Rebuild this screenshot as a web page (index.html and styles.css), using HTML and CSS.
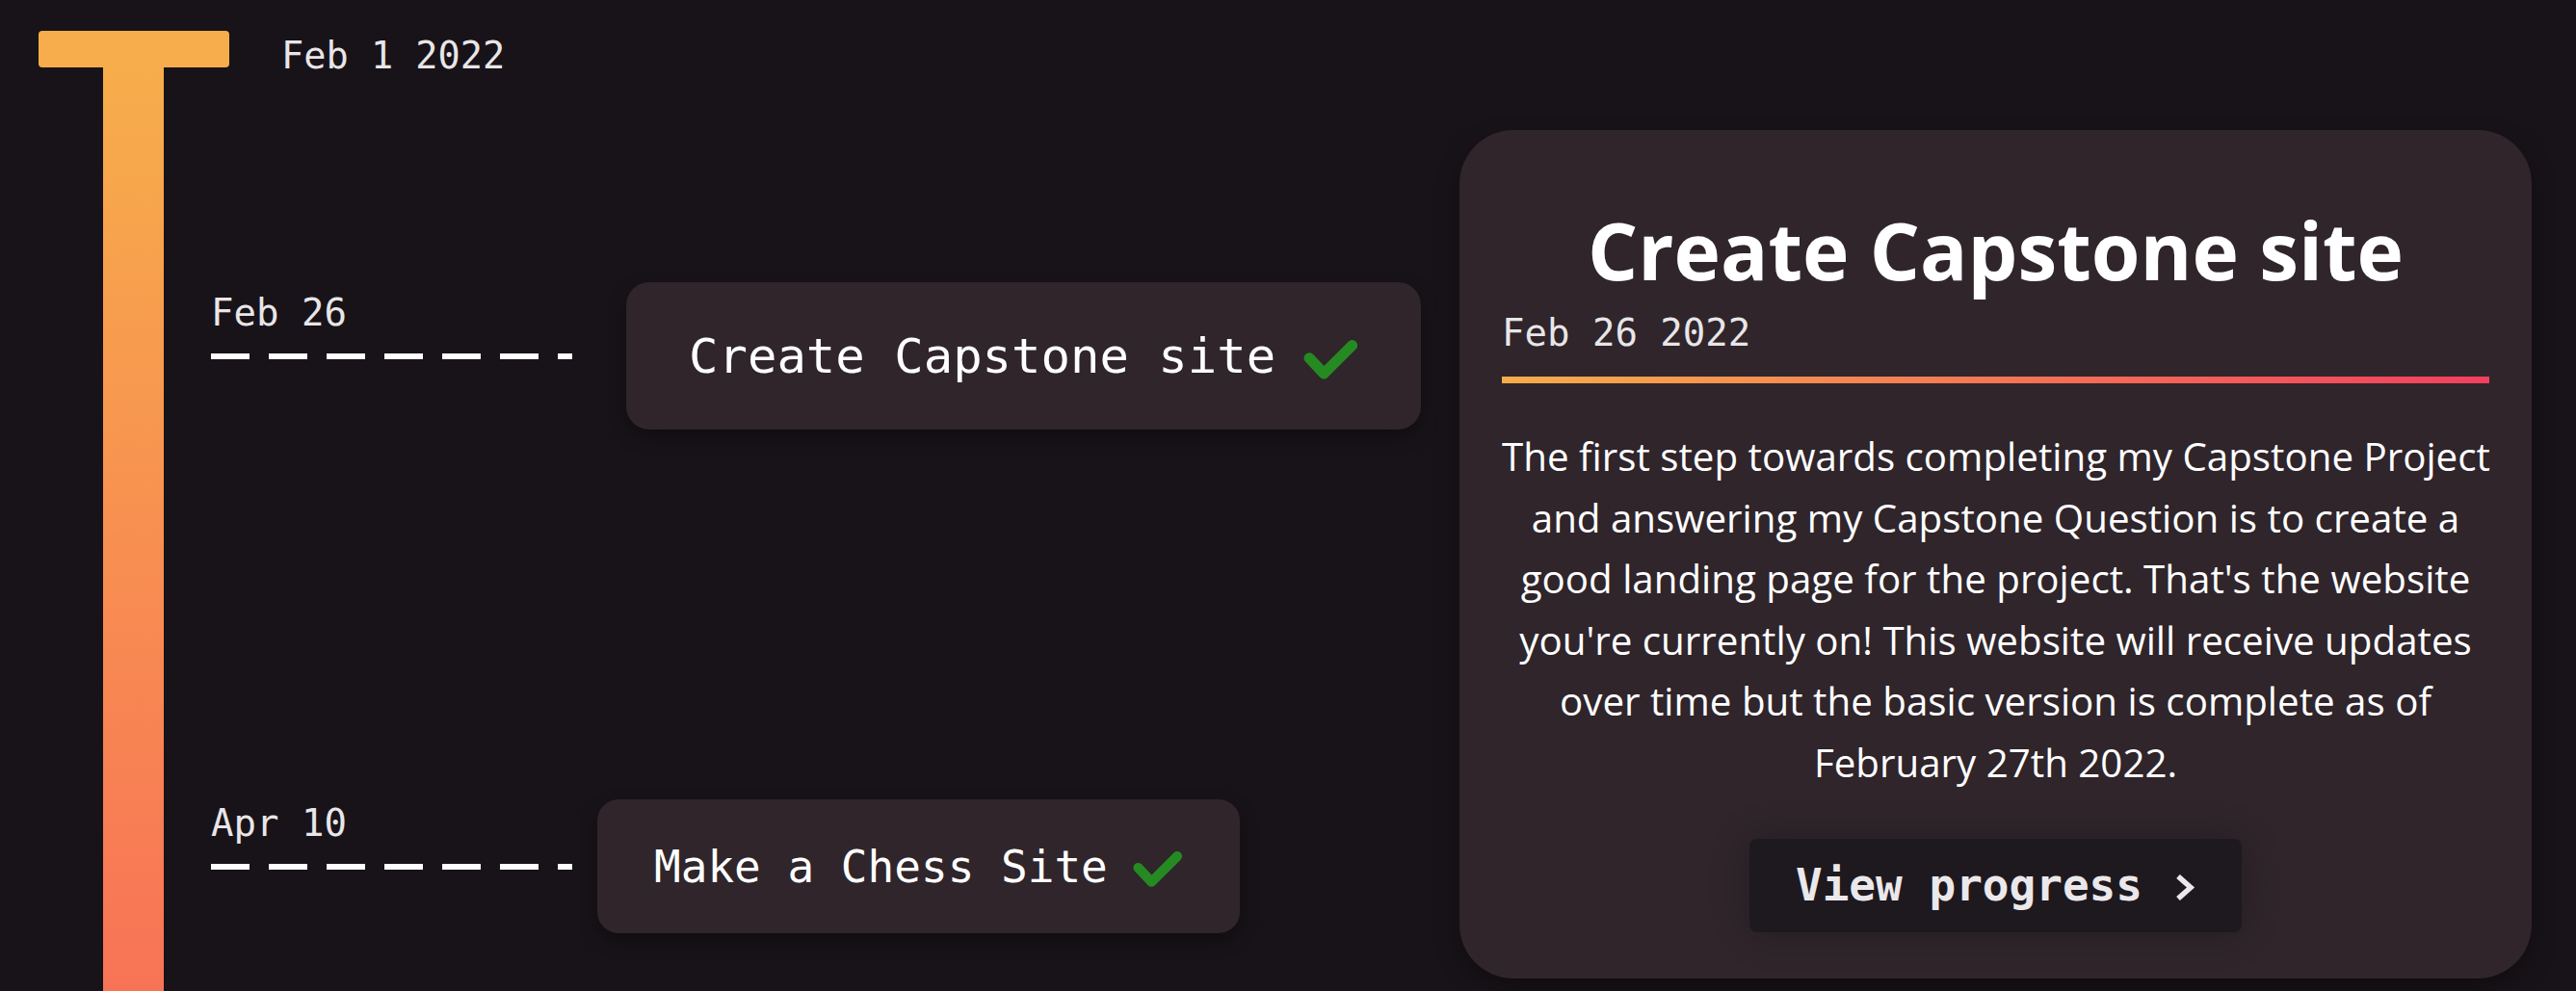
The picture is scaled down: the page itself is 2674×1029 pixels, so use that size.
FILE: index.html
```html
<!DOCTYPE html>
<html lang="en">
<head>
<meta charset="utf-8">
<title>Capstone timeline</title>
<link rel="stylesheet" href="styles.css">
</head>
<body>
<div class="page">
  <section class="timeline">
    <div class="rail">
      <div class="rail-cap"></div>
      <div class="rail-stem"></div>
    </div>
    <div class="events">
      <div class="start-date">Feb 1 2022</div>
      <div class="event event-first">
        <div class="connector">
          <span class="event-date">Feb 26</span>
          <span class="dash"></span>
        </div>
        <div class="event-card event-card-active">
          <span>Create Capstone site</span>
          <svg class="check" viewBox="0 0 56 42" aria-hidden="true"><polyline points="6,18.5 21,34.5 50,5.5"/></svg>
        </div>
      </div>
      <div class="event event-second">
        <div class="connector">
          <span class="event-date">Apr 10</span>
          <span class="dash"></span>
        </div>
        <div class="event-card">
          <span>Make a Chess Site</span>
          <svg class="check" viewBox="0 0 56 42" aria-hidden="true"><polyline points="6,18.5 21,34.5 50,5.5"/></svg>
        </div>
      </div>
    </div>
  </section>
  <article class="detail">
    <h1 class="detail-title">Create Capstone site</h1>
    <div class="detail-date">Feb 26 2022</div>
    <div class="detail-rule"></div>
    <p class="detail-text">The first step towards completing my Capstone Project<br>and answering my Capstone Question is to create a<br>good landing page for the project. That's the website<br>you're currently on! This website will receive updates<br>over time but the basic version is complete as of<br>February 27th 2022.</p>
    <button class="detail-button" type="button">View progress<svg class="chevron" viewBox="0 0 22 27" aria-hidden="true"><polyline points="4,2 17,13.5 4,25"/></svg></button>
  </article>
</div>
</body>
</html>
```

FILE: styles.css
```css
html, body {
  margin: 0;
  height: 100%;
}

body {
  background: #181318;
  overflow: hidden;
  font-family: "DejaVu Sans Mono", "Liberation Mono", monospace;
  color: #ffffff;
}

.page {
  display: flex;
  height: 1029px;
}

/* ---------- timeline ---------- */
.timeline {
  flex: 1;
  display: flex;
  padding-left: 107px;
}

.rail {
  flex: none;
  width: 63px;
  display: flex;
  flex-direction: column;
  align-items: center;
  padding-top: 32px;
}

.rail-cap {
  flex: none;
  width: 198px;
  height: 38px;
  background: #f7ad4b;
  border-radius: 4px;
}

.rail-stem {
  flex: 1;
  width: 63px;
  background: linear-gradient(180deg, #f7ad4b 0%, #f87356 100%);
}

.events {
  margin-left: 49px;
  padding-top: 37.5px;
  display: flex;
  flex-direction: column;
}

.start-date {
  margin-left: 73px;
  font-size: 38.6px;
  line-height: 40px;
  color: #e8e6e8;
}

.event {
  display: flex;
  align-items: center;
}

.event-first {
  margin-top: 215.5px;
}

.event-second {
  margin-top: 384px;
}

.connector {
  flex: none;
  width: 375px;
  display: flex;
  flex-direction: column;
  padding-bottom: 61.5px;
}

.event-date {
  font-size: 39px;
  line-height: 40px;
  color: #e8e6e8;
  margin-bottom: 21.5px;
}

.dash {
  display: block;
  height: 6px;
  background: repeating-linear-gradient(90deg, #ffffff 0 40px, transparent 40px 60px);
}

.event-card {
  flex: none;
  box-sizing: border-box;
  display: flex;
  align-items: center;
  height: 139px;
  margin-left: 26px;
  padding: 0 60px 0 59px;
  background: #2f252b;
  border-radius: 22px;
  box-shadow: 0 8px 18px rgba(0, 0, 0, 0.35);
  font-size: 46px;
  white-space: nowrap;
  color: #ffffff;
}

.event-card-active {
  height: 153px;
  margin-left: 56px;
  padding: 0 66px 0 65px;
  border-radius: 24px;
  font-size: 50.6px;
}

.check {
  flex: none;
  width: 1.12em;
  height: 0.84em;
  margin-left: 0.56em;
  margin-top: 0.18em;
  fill: none;
  stroke: #258a22;
  stroke-width: 11;
  stroke-linecap: round;
  stroke-linejoin: round;
}

/* ---------- detail card ---------- */
.detail {
  flex: none;
  box-sizing: border-box;
  width: 1113px;
  height: 881px;
  margin: 135px 46px 0 0;
  padding: 74.2px 44px 48px;
  background: #2f252b;
  border-radius: 56px;
  box-shadow: 0 10px 24px rgba(0, 0, 0, 0.35);
  display: flex;
  flex-direction: column;
}

.detail-title {
  margin: 0;
  text-align: center;
  font-family: "Open Sans", "Noto Sans", sans-serif;
  font-weight: 700;
  font-size: 82px;
  line-height: 100px;
  color: #ffffff;
}

.detail-date {
  margin-top: 16.4px;
  font-size: 39px;
  line-height: 40px;
  color: #e8e6e8;
}

.detail-rule {
  margin-top: 25.5px;
  height: 7px;
  background: linear-gradient(90deg, #f6ad4b 0%, #f43f5e 100%);
}

.detail-text {
  margin: 44px 0 0;
  text-align: center;
  white-space: nowrap;
  font-family: "Open Sans", "Noto Sans", sans-serif;
  font-size: 40.3px;
  line-height: 63.6px;
  color: #ffffff;
}

.detail-button {
  align-self: center;
  margin-top: 47.4px;
  height: 97px;
  padding: 0 48px 0 48px;
  border: 0;
  border-radius: 8px;
  background: #1e191e;
  box-shadow: 0 0 40px rgba(0, 0, 0, 0.22);
  color: #ebe8eb;
  font-family: "DejaVu Sans Mono", monospace;
  font-weight: 700;
  font-size: 46px;
  line-height: 97px;
  white-space: nowrap;
}

.chevron {
  width: 22px;
  height: 27px;
  margin-left: 33px;
  vertical-align: baseline;
  fill: none;
  stroke: #ebe8eb;
  stroke-width: 5.5;
  stroke-linecap: butt;
  stroke-linejoin: miter;
}
```
